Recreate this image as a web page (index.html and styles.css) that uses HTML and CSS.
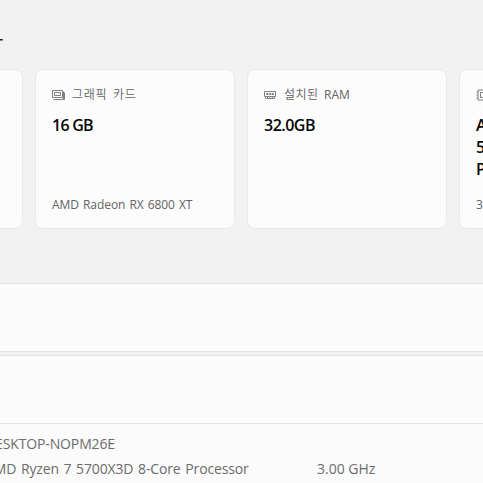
FILE: index.html
```html
<!DOCTYPE html>
<html lang="ko">
<head>
<meta charset="utf-8">
<title>시스템 정보</title>
<link rel="stylesheet" href="styles.css">
</head>
<body>
<main class="page">
  <h1 class="title"><span>ㅡ</span></h1>
  <section class="cards">
    <article class="card"></article>
    <article class="card">
      <div class="label">
        <svg class="icon" viewBox="0 0 14 12"><path d="M.5 1.5h10v7H.5zM2.5 3.5h6v3h-6zM1.5 10.5h11V3.5M11.5 2.5v8" /></svg>
        <span class="label-gpu">그래픽 카드</span>
      </div>
      <p class="value value-gpu">16 GB</p>
      <p class="detail">AMD Radeon RX 6800 XT</p>
    </article>
    <article class="card">
      <div class="label">
        <svg class="icon" viewBox="0 0 14 12"><path d="M.5 2.5h11v5H.5zM2.5 4.5h1.5v1H2.5zM5.3 4.5h1.5v1H5.3zM8 4.5h1.5v1H8zM1.5 7.5v2h9v-2M3.5 8v1.5M6 8v1.5M8.5 8v1.5" /></svg>
        <span class="label-ram">설치된 <span class="latin">RAM</span></span>
      </div>
      <p class="value value-ram">32.0GB</p>
    </article>
    <article class="card">
      <div class="label">
        <svg class="icon" viewBox="0 0 14 12"><path d="M2 1h10v10H2zM4.5 3.5h5v5h-5zM.5 3H2M.5 6H2M.5 9H2M12 3h1.5M12 6h1.5M12 9h1.5" /></svg>
        <span>프로세서</span>
      </div>
      <p class="value">AMD Ryzen 7<br>5700X3D 8-Core<br>Processor</p>
      <p class="detail">3.00 GHz</p>
    </article>
  </section>
  <section class="panel panel-device"></section>
  <section class="panel panel-specs">
    <div class="panel-head"></div>
    <dl class="specs">
      <dd><span class="host">DESKTOP-NOPM26E</span></dd>
      <dd><span class="cpu">AMD Ryzen 7 5700X3D 8-Core Processor</span><span class="speed">3.00 GHz</span></dd>
    </dl>
  </section>
</main>
</body>
</html>
```

FILE: styles.css
```css
* { box-sizing: border-box; }
body, h1, p, dl, dd { margin: 0; }
body {
  background: #f2f2f2;
  color: #636363;
  font-family: "Open Sans", "Noto Sans CJK KR", sans-serif;
  overflow: hidden;
}
.page { width: 483px; height: 483px; overflow: hidden; }
.title {
  display: flex;
  height: 69px;
  padding-top: 30px;
  margin-left: -13px;
  color: #1b1b1b;
  font-size: 18px;
  font-weight: 500;
  line-height: 20px;
}
.cards {
  display: flex;
  gap: 12px;
  width: 836px;
  height: 160px;
  margin-left: -177px;
}
.card {
  display: flex;
  flex-direction: column;
  width: 200px;
  padding: 15px 16px;
  border: 1px solid #e9e9e9;
  border-radius: 8px;
  background: #fcfcfc;
}
.label {
  display: flex;
  align-items: center;
  gap: 6px;
  height: 20px;
  font-size: 12px;
  line-height: 20px;
  white-space: nowrap;
}
.icon {
  width: 14px;
  height: 12px;
  margin-top: -1px;
  fill: none;
  stroke: #808080;
  stroke-width: 1;
}
.label-gpu { font-weight: 350; letter-spacing: 0.7px; word-spacing: 2px; }
.label-ram { font-weight: 350; letter-spacing: 0.45px; word-spacing: 2px; }
.latin { font-weight: 400; letter-spacing: 0; }
.value {
  margin-top: 9px;
  color: #050505;
  font-size: 16px;
  font-weight: 600;
  line-height: 22px;
  letter-spacing: -0.5px;
  white-space: nowrap;
}
.value-gpu { letter-spacing: -0.75px; }
.detail {
  margin-top: auto;
  margin-bottom: -1px;
  font-size: 12px;
  line-height: 18px;
  letter-spacing: -0.06px;
  word-spacing: 1px;
  white-space: nowrap;
}
.panel {
  border-top: 1px solid #e2e2e2;
  background: #fbfbfb;
}
.panel-device {
  height: 69px;
  margin-top: 54px;
  border-bottom: 1px solid #e2e2e2;
}
.panel-specs { height: 128px; margin-top: 3px; }
.panel-head { height: 68px; border-bottom: 1px solid #e3e3e3; }
.specs {
  padding-top: 7px;
  margin-left: -15px;
  font-size: 14px;
  line-height: 25px;
  white-space: nowrap;
  color: #6c6c6c;
}
.specs dd { display: flex; }
.host { letter-spacing: -0.13px; }
.cpu { width: 332px; letter-spacing: -0.14px; word-spacing: 1.2px; }
```
